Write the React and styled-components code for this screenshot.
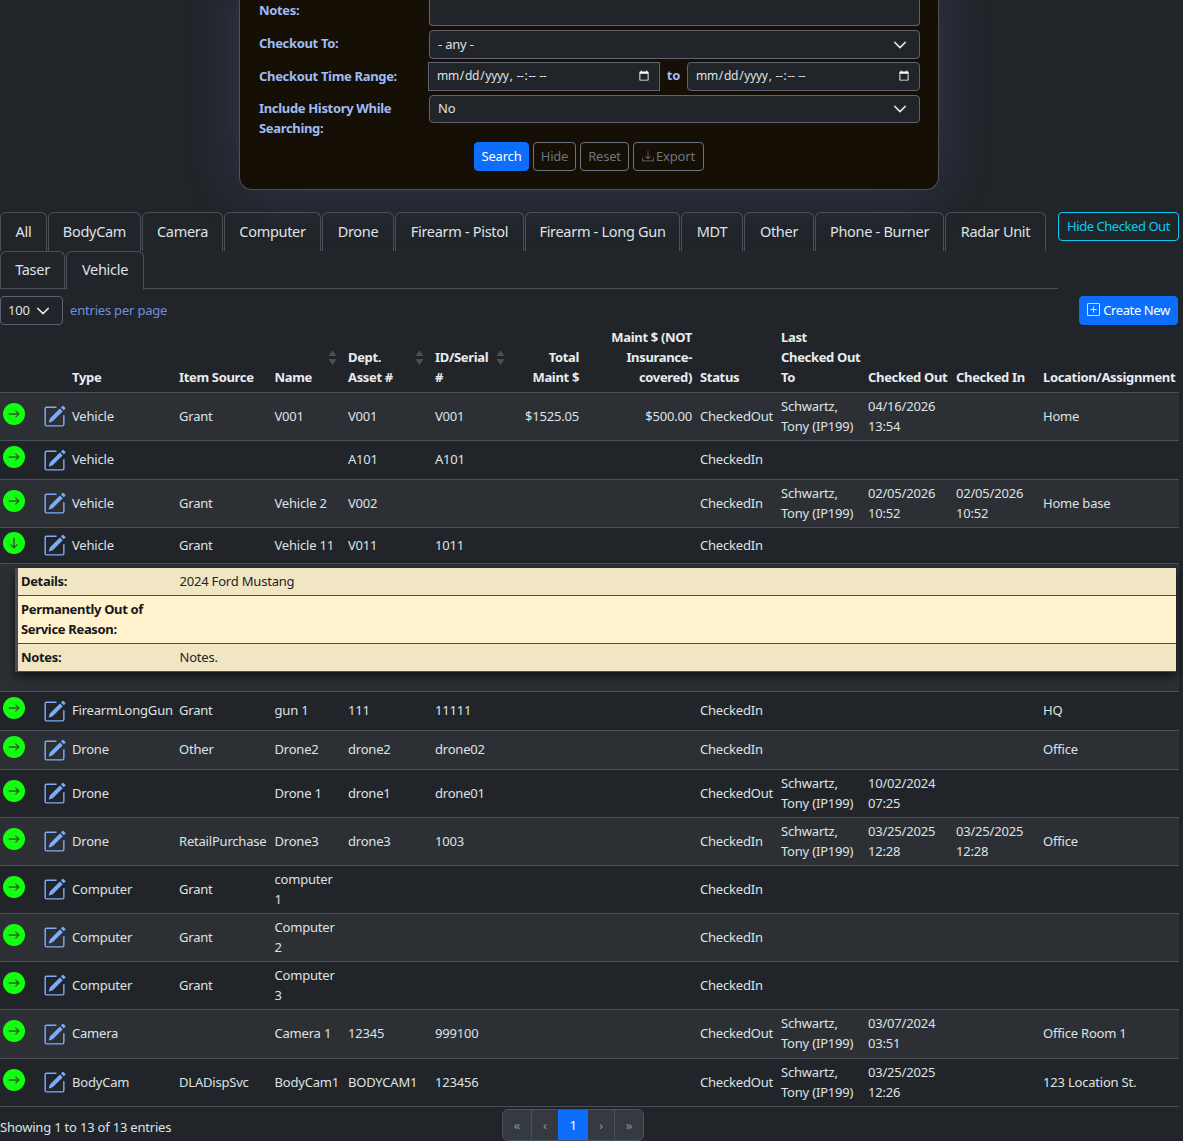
import React from 'react';
import styled, { createGlobalStyle } from 'styled-components';
import { BsPencilSquare, BsArrowRight, BsArrowDown, BsPlusSquare, BsDownload } from 'react-icons/bs';

const FONT = '"Noto Sans", "DejaVu Sans", sans-serif';
const chevron = "url(\"data:image/svg+xml,%3csvg xmlns='http://www.w3.org/2000/svg' viewBox='0 0 16 16'%3e%3cpath fill='none' stroke='%23dee2e6' stroke-linecap='round' stroke-linejoin='round' stroke-width='1.8' d='m2 5 6 6 6-6'/%3e%3c/svg%3e\")";

const Global = createGlobalStyle`
  html, body { margin: 0; padding: 0; height: 1141px; overflow: hidden; background: #212529; color-scheme: dark; }
  body { font-family: ${FONT}; font-size: 13px; line-height: 20px; color: #dee2e6; letter-spacing: -0.2px; }
  * { box-sizing: border-box; }
`;

const PageWrap = styled.div`
  width: 1179px;
`;
const Card = styled.section`
  width: 700px; margin: -39px 0 22px 239px; height: 229px; padding: 0 19px;
  background: #150f05; border: 1px solid #4f5159; border-top: 0; border-radius: 0 0 13px 13px;
  box-shadow: 0 0 55px rgba(105,105,215,.24);
`;
const FormRow = styled.div`
  display: grid; grid-template-columns: 170px 491px; margin-bottom: ${p => p.$after}px;
`;
const Label = styled.label`
  font-weight: 700; letter-spacing: -0.33px; color: #9dbcf5; align-self: ${p => p.$align || 'center'};
  padding-top: ${p => p.$pt || 0}px; padding-bottom: ${p => p.$pb ?? 3}px;
`;
const Notes = styled.div`
  height: 65px; border: 1px solid #5f6270; border-radius: 0 0 4px 4px; border-top: 0; background: #212529;
`;
const Select = styled.select`
  appearance: none; width: 100%; height: ${p => p.$h || 29}px; padding: 0 36px 2px 8px;
  font: inherit; letter-spacing: inherit; color: #dee2e6; background: #212529 ${chevron} no-repeat right 12px center / 14px 14px;
  border: 1px solid #5f6270; border-radius: 4px;
`;
const DateGroup = styled.div`
  display: flex; align-items: center; margin-left: -1px; width: 492px;
`;
const DateInput = styled.input`
  width: ${p => p.$w}px; height: 29px; padding: 0 7px 2px; font: inherit; font-size: 12px; letter-spacing: -0.3px; color: #dee2e6; color-scheme: dark;
  background: #212529; border: 1px solid #5f6270; border-radius: ${p => p.$r}px;
`;
const To = styled.span`
  width: 27px; text-align: center; font-weight: 700; color: #9dbcf5; padding-bottom: 3px;
`;
const Actions = styled.div`
  display: flex; justify-content: center; gap: 4px;
`;
const Btn = styled.button`
  height: 29px; padding: 0 0 2px; width: ${p => p.$w}px; font: inherit; letter-spacing: inherit; border-radius: 4px; cursor: pointer;
  display: inline-flex; align-items: center; justify-content: center; gap: 2px;
  color: ${p => p.$primary ? '#fff' : '#6c757d'};
  background: ${p => p.$primary ? '#0d6efd' : 'transparent'};
  border: 1px solid ${p => p.$primary ? '#0d6efd' : '#6c757d'};
`;

const TabBar = styled.div`
  display: flex; align-items: flex-start; height: 77px;
`;
const Tabs = styled.div`
  width: 1058px; display: flex; flex-wrap: wrap; align-content: flex-start; column-gap: 1px; border-bottom: 1px solid #495057; height: 77px;
`;
const Tab = styled.div`
  width: ${p => p.$w}px; height: ${p => p.$active ? 39 : 38.5}px; display: flex; align-items: center; justify-content: center; padding-bottom: 2px;
  font-size: 14.5px; letter-spacing: -0.3px; color: #dee2e6; border: 1px solid #495057; border-bottom: ${p => p.$active ? '1px solid #212529' : '0'};
  border-radius: 6px 6px 0 0; background: ${p => p.$active ? '#212529' : 'transparent'};
`;
const HideBtn = styled.button`
  width: 121px; height: 29px; padding: 0 0 2px; font: inherit; letter-spacing: -0.45px; color: #0dcaf0; background: transparent;
  border: 1px solid #0dcaf0; border-radius: 4px;
`;
const Toolbar = styled.div`
  display: flex; align-items: center; width: 1178px; height: 29px; margin-top: 7px; gap: 7px;
`;
const PerPage = styled(Select)`
  width: 63px; padding-left: 7px; padding-right: 20px; background-position: right 12px center;
`;
const PerPageText = styled.span`
  color: #6f90d8; padding-bottom: 2px;
`;
const CreateBtn = styled(Btn)`
  margin-left: auto; gap: 3px; letter-spacing: -0.4px;
`;

const Table = styled.table`
  margin-top: 2px; width: 1179px; table-layout: fixed; border-collapse: collapse;
`;
const Th = styled.th`
  position: relative; padding: 0 4px 5px; vertical-align: bottom; white-space: pre; font-weight: 700; letter-spacing: -0.33px; color: #e9ecef;
  text-align: ${p => p.$right ? 'right' : 'left'};
`;
const Sort = styled.svg`
  position: absolute; right: 7px; top: 23px; width: 9px; height: 15px; fill: #4a4f55;
`;
const HeadRow = styled.tr`
  height: 65px; border-bottom: 1px solid #495057;
`;
const Row = styled.tr`
  height: ${p => p.$h}px; border-bottom: 1px solid #495057; background: ${p => p.$odd ? '#2c3034' : '#212529'};
`;
const Td = styled.td`
  padding: 0 4px 2px; vertical-align: middle; white-space: pre; overflow: visible;
  text-align: ${p => p.$right ? 'right' : 'left'};
`;
const IconCell = styled.td`
  padding: 0; vertical-align: middle;
`;
const Circle = styled.span`
  display: flex; align-items: center; justify-content: center; width: 22px; height: 22px; margin: -6px 0 0 3px;
  border-radius: 50%; background: #12ff12; color: #3a4d2a; font-size: 12px;
  svg { stroke: currentColor; stroke-width: 0.7px; }
`;
const Edit = styled(BsPencilSquare)`
  display: block; width: 23px; height: 23px; color: #79adfc; margin: 0 0 0 9px;
`;
const DetailRow = styled.tr`
  height: 128px; border-bottom: 1px solid #495057; background: #2c3034;
`;
const DetailCell = styled.td`
  padding: 4px 3px 19px 15px; vertical-align: top;
`;
const DetailTable = styled.table`
  width: 100%; border-collapse: collapse; table-layout: fixed; color: #212529;
  border-left: 3px solid #4a4a58; border-bottom: 1px solid #4a4a58;
  box-shadow: 0 5px 10px rgba(0,0,0,.6);
`;
const DetailTr = styled.tr`
  height: ${p => p.$h}px; background: ${p => p.$alt ? '#f1e6c4' : '#fff2cc'}; border-bottom: 1px solid #4a4a58;
  &:last-child { border-bottom: 0; }
`;
const DetailLabel = styled.td`
  width: 159px; padding: 0 3px; font-weight: 700; letter-spacing: -0.33px; white-space: pre; color: #16181a;
`;
const DetailValue = styled.td`
  padding: 0 3px 0 4px;
`;
const Footer = styled.div`
  position: relative; height: 35px;
`;
const Showing = styled.span`
  position: absolute; left: 0; top: 10px;
`;
const Pager = styled.div`
  position: absolute; left: 502px; top: 2px; display: flex; height: 32px;
  border: 1px solid #495057; border-radius: 6px; overflow: hidden; background: #343a40;
`;
const Page = styled.span`
  width: ${p => p.$w}px; display: flex; align-items: center; justify-content: center;
  color: ${p => p.$active ? '#fff' : '#8f959b'};
  background: ${p => p.$active ? '#0d6efd' : 'transparent'};
  border-left: ${p => p.$first || p.$active ? '0' : '1px solid #495057'};
`;

const widths = [34, 34, 107, 95.5, 73.5, 87, 81, 71, 113, 81, 87, 88, 87, 140];
const TABS1 = [['All',47],['BodyCam',93],['Camera',81],['Computer',97],['Drone',72],['Firearm - Pistol',129],['Firearm - Long Gun',155],['MDT',62],['Other',70],['Phone - Burner',129],['Radar Unit',101]];
const rows = [
  ['Vehicle','Grant','V001','V001','V001','$1525.05','$500.00','CheckedOut','Schwartz,\nTony (IP199)','04/16/2026\n13:54','','Home',48],
  ['Vehicle','','','A101','A101','','','CheckedIn','','','','',39],
  ['Vehicle','Grant','Vehicle 2','V002','','','','CheckedIn','Schwartz,\nTony (IP199)','02/05/2026\n10:52','02/05/2026\n10:52','Home base',48],
  ['Vehicle','Grant','Vehicle 11','V011','1011','','','CheckedIn','','','','',36,true],
  'detail',
  ['FirearmLongGun','Grant','gun 1','111','11111','','','CheckedIn','','','','HQ',39],
  ['Drone','Other','Drone2','drone2','drone02','','','CheckedIn','','','','Office',39],
  ['Drone','','Drone 1','drone1','drone01','','','CheckedOut','Schwartz,\nTony (IP199)','10/02/2024\n07:25','','',48],
  ['Drone','RetailPurchase','Drone3','drone3','1003','','','CheckedIn','Schwartz,\nTony (IP199)','03/25/2025\n12:28','03/25/2025\n12:28','Office',48],
  ['Computer','Grant','computer\n1','','','','','CheckedIn','','','','',48],
  ['Computer','Grant','Computer\n2','','','','','CheckedIn','','','','',48],
  ['Computer','Grant','Computer\n3','','','','','CheckedIn','','','','',48],
  ['Camera','','Camera 1','12345','999100','','','CheckedOut','Schwartz,\nTony (IP199)','03/07/2024\n03:51','','Office Room 1',49],
  ['BodyCam','DLADispSvc','BodyCam1','BODYCAM1','123456','','','CheckedOut','Schwartz,\nTony (IP199)','03/25/2025\n12:26','','123 Location St.',48],
];
const heads = [['',0],['',0],['Type',0],['Item Source',0],['Name',0,1],['Dept.\nAsset #',0,1],['ID/Serial\n#',0,1],['Total\nMaint $',1],['Maint $ (NOT\nInsurance-\ncovered)',1],['Status',0],['Last\nChecked Out\nTo',0],['Checked Out',0],['Checked In',0],['Location/Assignment',0]];

const SortIcon = () => (
  <Sort viewBox="0 0 9 15"><path d="M4.5 0 8.5 6H.5zM4.5 15 .5 9h8z" /></Sort>
);

export default function App() {
  let stripe = true;
  return (
    <PageWrap>
      <Global />
      <Card>
        <FormRow $after={4}>
          <Label $align="end" $pb={6}>Notes:</Label>
          <Notes />
        </FormRow>
        <FormRow $after={3}>
          <Label>Checkout To:</Label>
          <Select defaultValue="any"><option value="any">- any -</option></Select>
        </FormRow>
        <FormRow $after={4}>
          <Label $pb={2}>Checkout Time Range:</Label>
          <DateGroup>
            <DateInput type="datetime-local" $w={232} $r={0} />
            <To>to</To>
            <DateInput type="datetime-local" $w={233} $r={4} />
          </DateGroup>
        </FormRow>
        <FormRow $after={4}>
          <Label $align="start" $pt={3} $pb={0}>Include History While<br />Searching:</Label>
          <Select $h={28} defaultValue="no"><option value="no">No</option></Select>
        </FormRow>
        <Actions>
          <Btn $primary $w={55}>Search</Btn>
          <Btn $w={43}>Hide</Btn>
          <Btn $w={49}>Reset</Btn>
          <Btn $w={71}><BsDownload size={12} />Export</Btn>
        </Actions>
      </Card>

      <TabBar>
        <Tabs>
          {TABS1.map(([t, w]) => <Tab key={t} $w={w}>{t}</Tab>)}
          <Tab $w={65}>Taser</Tab>
          <Tab $w={78} $active>Vehicle</Tab>
        </Tabs>
        <HideBtn>Hide Checked Out</HideBtn>
      </TabBar>

      <Toolbar>
        <PerPage defaultValue="100"><option value="100">100</option></PerPage>
        <PerPageText>entries per page</PerPageText>
        <CreateBtn $primary $w={99}><BsPlusSquare size={13} />Create New</CreateBtn>
      </Toolbar>

      <Table>
        <colgroup>{widths.map((w, i) => <col key={i} style={{ width: w }} />)}</colgroup>
        <thead>
          <HeadRow>
            {heads.map(([t, right, sort], i) => (
              <Th key={i} $right={!!right}>{t}{sort ? <SortIcon /> : null}</Th>
            ))}
          </HeadRow>
        </thead>
        <tbody>
          {rows.map((r, i) => {
            if (r === 'detail') {
              stripe = !stripe;
              return (
                <DetailRow key={i}>
                  <DetailCell colSpan={14}>
                    <DetailTable>
                      <tbody>
                        <DetailTr $alt $h={27}><DetailLabel>Details:</DetailLabel><DetailValue>2024 Ford Mustang</DetailValue></DetailTr>
                        <DetailTr $h={48}><DetailLabel>{'Permanently Out of\nService Reason:'}</DetailLabel><DetailValue /></DetailTr>
                        <DetailTr $alt $h={28}><DetailLabel>Notes:</DetailLabel><DetailValue>Notes.</DetailValue></DetailTr>
                      </tbody>
                    </DetailTable>
                  </DetailCell>
                </DetailRow>
              );
            }
            const odd = stripe;
            stripe = !stripe;
            const cells = r.slice(0, 12);
            return (
              <Row key={i} $h={r[12]} $odd={odd}>
                <IconCell><Circle>{r[13] ? <BsArrowDown /> : <BsArrowRight />}</Circle></IconCell>
                <IconCell><Edit /></IconCell>
                {cells.map((c, j) => <Td key={j} $right={j === 5 || j === 6}>{c}</Td>)}
              </Row>
            );
          })}
        </tbody>
      </Table>

      <Footer>
        <Showing>Showing 1 to 13 of 13 entries</Showing>
        <Pager>
          <Page $w={28} $first>«</Page>
          <Page $w={27}>‹</Page>
          <Page $w={30} $active>1</Page>
          <Page $w={26} $first>›</Page>
          <Page $w={29}>»</Page>
        </Pager>
      </Footer>
    </PageWrap>
  );
}
